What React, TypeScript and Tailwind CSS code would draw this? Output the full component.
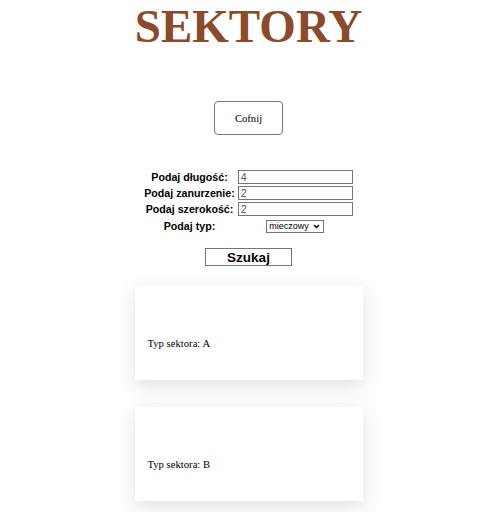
import React, { useState } from "react";

const sectors = ["A", "B"];

export default function App() {
  const [length, setLength] = useState("4");
  const [draft, setDraft] = useState("2");
  const [width, setWidth] = useState("2");
  const [type, setType] = useState("mieczowy");

  const fields = [
    { label: "Podaj długość:", value: length, set: setLength },
    { label: "Podaj zanurzenie:", value: draft, set: setDraft },
    { label: "Podaj szerokość:", value: width, set: setWidth },
  ];

  return (
    <div className="min-h-screen bg-white flex flex-col items-center font-['Liberation_Serif',serif] text-black">
      <h1 className="pt-[3px] text-[47px] leading-[47px] font-bold text-[#8a4a2b]">SEKTORY</h1>

      <button className="mt-[51px] w-[69px] h-[34px] border border-[#767676] rounded-[4px] bg-white text-[10.67px] leading-[12px]">
        Cofnij
      </button>

      <div className="mt-[35px] grid grid-cols-[auto_auto] gap-x-[3px] gap-y-[2px] items-center justify-items-center font-['Liberation_Sans',Arial,sans-serif]">
        {fields.map((f) => (
          <React.Fragment key={f.label}>
            <label className="text-center whitespace-nowrap text-[10.67px] font-bold leading-[14px]">
              {f.label}
            </label>
            <input
              value={f.value}
              onChange={(e) => f.set(e.target.value)}
              className="w-[115px] h-[14px] border border-[#767676] px-[2px] text-[10.67px] leading-[12px] text-[#555] outline-none"
            />
          </React.Fragment>
        ))}
        <label className="mt-[2px] text-center whitespace-nowrap text-[10.67px] font-bold leading-[13px]">
          Podaj typ:
        </label>
        <div className="relative mt-[2px] w-[58px] h-[13px]">
          <select
            value={type}
            onChange={(e) => setType(e.target.value)}
            className="block appearance-none w-full h-full border border-[#767676] bg-white text-[9px] leading-[11px] pl-[2px] pr-[12px] py-0 text-black outline-none"
          >
            <option>mieczowy</option>
            <option>kilowy</option>
          </select>
          <svg
            className="absolute right-[4px] top-[4px] pointer-events-none"
            width="7"
            height="5"
            viewBox="0 0 7 5"
          >
            <path d="M1 1l2.5 2.5L6 1" fill="none" stroke="#000" strokeWidth="1.4" />
          </svg>
        </div>
      </div>

      <button className="mt-[15px] w-[87px] h-[18px] border border-[#767676] bg-white font-['Liberation_Sans',Arial,sans-serif] text-[13.5px] font-bold leading-[15px]">
        Szukaj
      </button>

      <div className="mt-[20px] flex flex-col gap-[27px] pb-[20px]">
        {sectors.map((s) => (
          <div
            key={s}
            className="w-[228px] h-[94px] bg-white shadow-[0_6px_18px_rgba(70,40,40,0.15)] pl-[13px] pt-[51px] text-[10.67px] leading-[12px]"
          >
            Typ sektora: {s}
          </div>
        ))}
      </div>
    </div>
  );
}
